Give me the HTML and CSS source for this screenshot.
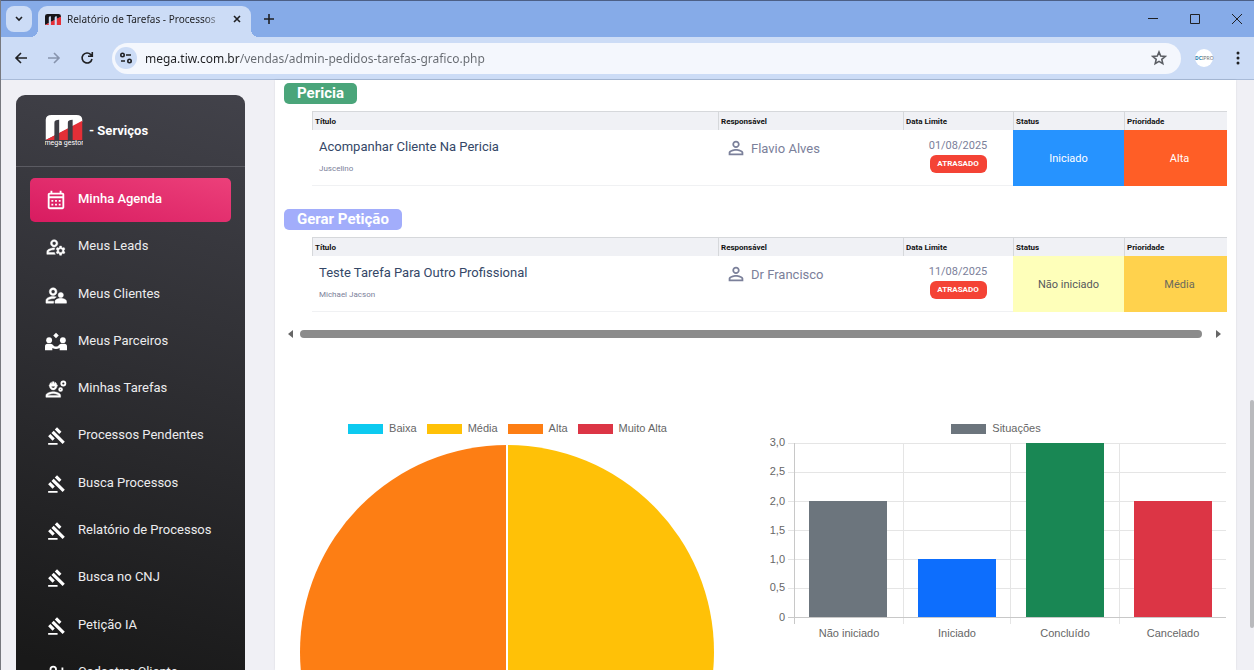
FILE: index.html
```html
<!DOCTYPE html>
<html lang="pt-BR">
  <head>
    <meta charset="UTF-8" />
    <meta name="viewport" content="width=device-width, initial-scale=1.0" />
    <title>Relatório de Tarefas - Processos</title>
    <link rel="stylesheet" href="styles.css">
  </head>
  <body>
    <!-- shared icons -->
    <svg class="sprite" aria-hidden="true">
      <symbol id="gavel" viewBox="-3 -2 28 28">
        <path d="M1 21h12v2H1zM5.245 8.07l2.83-2.827 14.14 14.142-2.828 2.828zM12.317 1l5.657 5.656-2.83 2.83-5.654-5.66zM3.825 9.485l5.657 5.657-2.828 2.828-5.657-5.657z" />
      </symbol>
      <symbol id="person" viewBox="0 0 24 24">
        <path d="M12 5.9a2.1 2.1 0 110 4.2 2.1 2.1 0 010-4.2m0 9c2.97 0 6.1 1.46 6.1 2.1v1.1H5.9V17c0-.64 3.13-2.1 6.1-2.1M12 4C9.79 4 8 5.79 8 8s1.79 4 4 4 4-1.79 4-4-1.79-4-4-4zm0 9c-2.67 0-8 1.34-8 4v3h16v-3c0-2.66-5.33-4-8-4z" />
      </symbol>
      <symbol id="mark" viewBox="0 0 38 26">
        <path d="M0 26V5Q0 0 6 0H32Q38 0 38 5V7L0 26Z" fill="var(--mark)" />
        <path d="M0 26L38 6V26Z" fill="#e42f37" />
        <path d="M9 26V8Q9 5 14 5V26ZM23 26V8Q23 5 28 5V26Z" fill="var(--slot)" />
      </symbol>
    </svg>

    <header class="browser">
      <div class="tab-strip">
        <button type="button" class="tab-search" aria-label="Pesquisar guias">
          <svg width="10" height="10" viewBox="0 0 10 10"><path d="M2 3l3 3 3-3" /></svg>
        </button>
        <div class="tab">
          <svg class="favicon" width="16" height="13"><use href="#mark" /></svg>
          <span class="tab-title">Relatório de Tarefas - Processos</span>
          <button type="button" class="icon-button" aria-label="Fechar">
            <svg width="10" height="10" viewBox="0 0 10 10"><path d="M2 2l6 6M8 2l-6 6" /></svg>
          </button>
        </div>
        <button type="button" class="icon-button new-tab" aria-label="Nova guia">
          <svg width="12" height="12" viewBox="0 0 12 12"><path d="M6 1v10M1 6h10" /></svg>
        </button>
        <div class="window-buttons">
          <button type="button" class="icon-button" aria-label="Minimizar">
            <svg width="10" height="10" viewBox="0 0 10 10"><path d="M0 4.5h10" class="thin" /></svg>
          </button>
          <button type="button" class="icon-button" aria-label="Maximizar">
            <svg width="10" height="10" viewBox="0 0 10 10"><path d="M.5.5h9v9h-9z" class="thin" /></svg>
          </button>
          <button type="button" class="icon-button" aria-label="Fechar janela">
            <svg width="10" height="10" viewBox="0 0 10 10"><path d="M0 0l10 10M10 0L0 10" class="thin" /></svg>
          </button>
        </div>
      </div>

      <div class="toolbar">
        <button type="button" class="icon-button" aria-label="Voltar">
          <svg width="14" height="14" viewBox="0 0 14 14"><path d="M13 7H2M7 2L2 7l5 5" /></svg>
        </button>
        <button type="button" class="icon-button dim" aria-label="Avançar">
          <svg width="14" height="14" viewBox="0 0 14 14"><path d="M1 7h11M7 2l5 5-5 5" /></svg>
        </button>
        <button type="button" class="icon-button" aria-label="Recarregar">
          <svg width="14" height="14" viewBox="0 0 14 14"><path d="M12 8A5 5 0 1 1 10.8 3.6L12 5M12.3 1v4.3H8" /></svg>
        </button>
        <div class="address">
          <button type="button" class="site-info" aria-label="Informações do site">
            <svg width="14" height="14" viewBox="0 0 14 14">
              <circle cx="3.5" cy="4" r="1.7" /><path d="M7 4h5M2 10h4" /><circle cx="10.5" cy="10" r="1.7" />
            </svg>
          </button>
          <input type="text" class="url" aria-label="Endereço" value="mega.tiw.com.br/vendas/admin-pedidos-tarefas-grafico.php" />
          <button type="button" class="icon-button star" aria-label="Favoritar">
            <svg width="16" height="16" viewBox="0 0 16 16"><path d="M8 2l1.7 4.1 4.4.4-3.3 2.9 1 4.3L8 11.4l-3.8 2.3 1-4.3L1.9 6.5l4.4-.4z" /></svg>
          </button>
        </div>
        <button type="button" class="profile" aria-label="Perfil"><b>DC</b>IPRO</button>
        <button type="button" class="icon-button menu" aria-label="Menu">
          <svg width="4" height="14" viewBox="0 0 4 14"><circle cx="2" cy="2" r="1.5" /><circle cx="2" cy="7" r="1.5" /><circle cx="2" cy="12" r="1.5" /></svg>
        </button>
      </div>
    </header>

    <div class="page">
      <aside class="sidebar">
        <a href="#" class="brand">
          <svg class="brand-logo" width="38" height="32" viewBox="0 0 38 32">
            <use href="#mark" width="38" height="25" />
            <text x="19" y="30" text-anchor="middle">mega gestor</text>
          </svg>
          <span>- Serviços</span>
        </a>
        <nav class="menu-list">
          <a href="#" class="menu-item active">
            <svg viewBox="0 0 24 24"><path d="M19 4h-1V2h-2v2H8V2H6v2H5c-1.11 0-1.99.9-1.99 2L3 20c0 1.1.89 2 2 2h14c1.1 0 2-.9 2-2V6c0-1.1-.9-2-2-2zm0 16H5V10h14v10zm0-12H5V6h14v2zM9 14H7v-2h2v2zm4 0h-2v-2h2v2zm4 0h-2v-2h2v2zm-8 4H7v-2h2v2zm4 0h-2v-2h2v2zm4 0h-2v-2h2v2z" /></svg>
            <span>Minha Agenda</span>
          </a>
          <a href="#" class="menu-item">
            <svg class="heavy" viewBox="0 0 24 24"><path d="M4 18v-.65c0-.34.16-.66.41-.81C6.1 15.53 8.03 15 10 15c.03 0 .05 0 .08.01.1-.7.3-1.37.59-1.98-.22-.02-.44-.03-.67-.03-2.42 0-4.68.67-6.61 1.82-.88.52-1.39 1.5-1.39 2.53V20h9.26c-.42-.6-.75-1.28-.97-2H4zM10 12c2.21 0 4-1.79 4-4s-1.79-4-4-4-4 1.79-4 4 1.79 4 4 4zm0-6c1.1 0 2 .9 2 2s-.9 2-2 2-2-.9-2-2 .9-2 2-2zM20.75 16c0-.22-.03-.42-.06-.63l1.14-1.01-1-1.73-1.45.49c-.32-.27-.68-.48-1.08-.63L18 11h-2l-.3 1.49c-.4.15-.76.36-1.08.63l-1.45-.49-1 1.73 1.14 1.01c-.03.21-.06.41-.06.63s.03.42.06.63l-1.14 1.01 1 1.73 1.45-.49c.32.27.68.48 1.08.63L16 21h2l.3-1.49c.4-.15.76-.36 1.08-.63l1.45.49 1-1.73-1.14-1.01c.03-.21.06-.41.06-.63zM17 18c-1.1 0-2-.9-2-2s.9-2 2-2 2 .9 2 2-.9 2-2 2z" /></svg>
            <span>Meus Leads</span>
          </a>
          <a href="#" class="menu-item">
            <svg class="heavy" viewBox="1 0 23 23"><path d="M9.5 12c2.2 0 4-1.8 4-4s-1.8-4-4-4-4 1.800-4 4 1.800 4 4 4zm0-6c1.100 0 2 .9 2 2s-.9 2-2 2-2-.9-2-2 .9-2 2-2zM10 18H4v-.7c0-.8 3-2.100 5.500-2.100h1.300c.5-.8 1.200-1.300 2-1.700-1-.3-2.200-.5-3.300-.5-2.700 0-7.500 1.300-7.500 4.200V20h8zM17.500 15c-2 0-6 1-6 3.200V20h12v-1.800c0-2.200-4-3.200-6-3.200z" /><circle cx="17.500" cy="11.500" r="2.700" /></svg>
            <span>Meus Clientes</span>
          </a>
          <a href="#" class="menu-item">
            <svg viewBox="0 0 24 24"><path d="M12 2l3 3-3 3-3-3z" /><circle cx="4.500" cy="10" r="3.200" /><circle cx="19.500" cy="10" r="3.200" /><path d="M0 21v-4q0-3 3-3h3q2 0 3.500 2 1 1 2.500 1t2.500-1q1.500-2 3.500-2h3q3 0 3 3v4h-8v-2.500q-2 1-4 1t-4-1V21z" /></svg>
            <span>Meus Parceiros</span>
          </a>
          <a href="#" class="menu-item">
            <svg class="heavy" viewBox="0 0 24 24">
              <path d="M9 15c-2.67 0-8 1.34-8 4v2h16v-2c0-2.66-5.33-4-8-4zm-6 4c.22-.72 3.31-2 6-2 2.7 0 5.77 1.29 6 2H3zM4.74 9H5c0 2.21 1.79 4 4 4s4-1.79 4-4h.26c.27 0 .49-.22.49-.49v-.02c0-.27-.22-.49-.49-.49H13c0-1.48-.81-2.75-2-3.45v.95c0 .28-.22.5-.5.5s-.5-.22-.5-.5V4.14C9.68 4.06 9.35 4 9 4s-.68.06-1 .14V5.5c0 .28-.22.5-.5.5S7 5.78 7 5.5v-.95C5.81 5.25 5 6.52 5 8h-.26c-.27 0-.49.22-.49.49v.03c0 .26.22.48.49.48zM11 9c0 1.1-.9 2-2 2s-2-.9-2-2h4z" />
              <g class="gears"><circle cx="20" cy="6" r="2.2" /><circle cx="17" cy="12.5" r="1.5" /></g>
            </svg>
            <span>Minhas Tarefas</span>
          </a>
          <a href="#" class="menu-item"><svg><use href="#gavel" /></svg><span>Processos Pendentes</span></a>
          <a href="#" class="menu-item"><svg><use href="#gavel" /></svg><span>Busca Processos</span></a>
          <a href="#" class="menu-item"><svg><use href="#gavel" /></svg><span>Relatório de Processos</span></a>
          <a href="#" class="menu-item"><svg><use href="#gavel" /></svg><span>Busca no CNJ</span></a>
          <a href="#" class="menu-item"><svg><use href="#gavel" /></svg><span>Petição IA</span></a>
          <a href="#" class="menu-item">
            <svg viewBox="0 0 24 24"><path d="M9 4a4 4 0 100 8 4 4 0 000-8zm0 2a2 2 0 110 4 2 2 0 010-4zM18 6h2v3h3v2h-3v3h-2v-3h-3V9h3zM1 20v-3c0-2.5 5-4 8-4s8 1.5 8 4v3zm2-2h12v-1c0-.6-3-2-6-2s-6 1.4-6 2z" /></svg>
            <span>Cadastrar Cliente</span>
          </a>
        </nav>
      </aside>

      <main class="card">
        <section class="group">
          <h2 class="group-title green">Pericia</h2>
          <table class="tasks">
            <thead>
              <tr>
                <th>Título</th>
                <th class="col-owner">Responsável</th>
                <th class="col-date">Data Limite</th>
                <th class="col-status">Status</th>
                <th class="col-priority">Prioridade</th>
              </tr>
            </thead>
            <tbody>
              <tr>
                <td class="task"><a href="#">Acompanhar Cliente Na Pericia</a><small>Juscelino</small></td>
                <td><div class="owner"><svg width="22" height="22"><use href="#person" /></svg>Flavio Alves</div></td>
                <td class="date">01/08/2025<span class="late">ATRASADO</span></td>
                <td class="state started">Iniciado</td>
                <td class="state priority high">Alta</td>
              </tr>
            </tbody>
          </table>
        </section>

        <section class="group">
          <h2 class="group-title lilac">Gerar Petição</h2>
          <table class="tasks">
            <thead>
              <tr>
                <th>Título</th>
                <th class="col-owner">Responsável</th>
                <th class="col-date">Data Limite</th>
                <th class="col-status">Status</th>
                <th class="col-priority">Prioridade</th>
              </tr>
            </thead>
            <tbody>
              <tr>
                <td class="task"><a href="#">Teste Tarefa Para Outro Profissional</a><small>Michael Jacson</small></td>
                <td><div class="owner"><svg width="22" height="22"><use href="#person" /></svg>Dr Francisco</div></td>
                <td class="date">11/08/2025<span class="late">ATRASADO</span></td>
                <td class="state waiting">Não iniciado</td>
                <td class="state priority medium">Média</td>
              </tr>
            </tbody>
          </table>
        </section>

        <div class="scroll-x">
          <svg width="5" height="8" viewBox="0 0 5 8"><path d="M5 0v8L0 4z" /></svg>
          <div class="scroll-thumb"></div>
          <svg width="5" height="8" viewBox="0 0 5 8"><path d="M0 0v8l5-4z" /></svg>
        </div>

        <div class="charts">
          <figure class="chart">
            <figcaption class="legend">
              <span class="key cyan">Baixa</span>
              <span class="key yellow">Média</span>
              <span class="key orange">Alta</span>
              <span class="key red">Muito Alta</span>
            </figcaption>
            <svg class="pie" viewBox="0 0 415 415">
              <path d="M207 207V0a207 207 0 0 1 0 414z" fill="#ffc107" />
              <path d="M207 207V414a207 207 0 0 1 0-414z" fill="#fd7e14" />
              <path d="M207 0v415" stroke="#fff" stroke-width="2" />
            </svg>
          </figure>

          <figure class="chart">
            <figcaption class="legend">
              <span class="key gray">Situações</span>
            </figcaption>
            <svg class="bars" viewBox="0 0 462 206">
              <g class="grid">
                <path d="M23 7.5h438M23 36.5h438M23 65.5h438M23 94.5h438M23 123.5h438M23 152.5h438" />
                <path d="M138.5 7v181M245.5 7v181M354.5 7v181" />
                <path class="axis" d="M23 181.5h438M29.5 7v181" />
              </g>
              <rect x="44" y="65" width="78" height="116" fill="#6c757d" />
              <rect x="153" y="123" width="78" height="58" fill="#0d6efd" />
              <rect x="261" y="7" width="78" height="174" fill="#198754" />
              <rect x="369" y="65" width="78" height="116" fill="#dc3545" />
              <g text-anchor="end">
                <text x="20" y="10">3,0</text>
                <text x="20" y="39">2,5</text>
                <text x="20" y="69">2,0</text>
                <text x="20" y="98">1,5</text>
                <text x="20" y="127">1,0</text>
                <text x="20" y="155">0,5</text>
                <text x="20" y="185">0</text>
              </g>
              <g text-anchor="middle">
                <text x="84" y="201">Não iniciado</text>
                <text x="192" y="201">Iniciado</text>
                <text x="300" y="201">Concluído</text>
                <text x="408" y="201">Cancelado</text>
              </g>
            </svg>
          </figure>
        </div>
      </main>

      <div class="scroll-y"><div class="scroll-y-thumb"></div></div>
    </div>
  </body>
</html>
```
FILE: styles.css
```css
* {
  box-sizing: border-box;
}

body {
  margin: 0;
  height: 100vh;
  display: flex;
  flex-direction: column;
  overflow: hidden;
  background: #f0f0f5;
  border-left: 1px solid #77797f;
  font-family: Roboto, "Liberation Sans", sans-serif;
}

.sprite {
  display: none;
}

a {
  color: inherit;
  text-decoration: none;
}

button {
  border: 0;
  padding: 0;
  background: none;
  font: inherit;
}

/* browser window */
.browser {
  flex: none;
  border-top: 1px solid #4c5f86;
  border-bottom: 1px solid #a9bbd8;
  background: #ccdcf6;
  font-family: "Noto Sans", "Open Sans", sans-serif;
}

.browser svg {
  display: block;
  fill: none;
  stroke: #1f2023;
  stroke-width: 1.6;
}

.browser .thin {
  stroke-width: 1;
}

.tab-strip {
  display: flex;
  align-items: center;
  height: 36px;
  background: #86abe8;
}

.tab-search {
  display: grid;
  place-items: center;
  width: 26px;
  height: 26px;
  margin-left: 5px;
  border-radius: 8px;
  background: #ccdcf6;
}

.tab {
  position: relative;
  align-self: flex-end;
  display: flex;
  align-items: center;
  gap: 6px;
  width: 213px;
  height: 31px;
  margin-left: 6px;
  padding: 0 6px 5px 7px;
  border-radius: 9px 9px 0 0;
  background: #ccdcf6;
}

.tab::before,
.tab::after {
  content: "";
  position: absolute;
  bottom: 0;
  width: 8px;
  height: 8px;
}

.tab::before {
  right: 100%;
  background: radial-gradient(circle at 0 0, #86abe8 8px, #ccdcf6 8px);
}

.tab::after {
  left: 100%;
  background: radial-gradient(circle at 100% 0, #86abe8 8px, #ccdcf6 8px);
}

.browser .favicon {
  --mark: #16161a;
  --slot: #ccdcf6;
  flex: none;
  stroke: none;
}

.tab-title {
  flex: 1;
  overflow: hidden;
  white-space: nowrap;
  font-size: 10px;
  color: #1f2023;
  mask-image: linear-gradient(to right, #000 88%, transparent);
}

.icon-button {
  display: grid;
  place-items: center;
  width: 16px;
  height: 24px;
}

.new-tab {
  margin-left: 10px;
}

.window-buttons {
  display: flex;
  gap: 26px;
  margin-left: auto;
  margin-right: 9px;
}

.toolbar {
  display: flex;
  align-items: center;
  gap: 17px;
  height: 42px;
  padding: 0 8px 0 12px;
}

.browser .dim svg {
  stroke: #8794ad;
}

.address {
  flex: 1;
  display: flex;
  align-items: center;
  gap: 8px;
  height: 31px;
  padding: 0 14px 0 3px;
  border-radius: 16px;
  background: #f4f7fd;
}

.site-info {
  display: grid;
  place-items: center;
  width: 22px;
  height: 22px;
  border-radius: 50%;
  background: #ccdcf6;
}

.browser .star svg {
  stroke: #5b5e64;
}

/* the host is darker than the path */
.url {
  flex: 1;
  border: 0;
  padding: 0;
  background: linear-gradient(to right, #1f2023 95px, #666a70 95px);
  background-clip: text;
  -webkit-background-clip: text;
  -webkit-text-fill-color: transparent;
  color: #1f2023;
  font: 12px "Noto Sans", "Open Sans", sans-serif;
}

.profile {
  width: 18px;
  height: 18px;
  margin-left: -3px;
  border-radius: 50%;
  background: #fff;
  color: #6d6f73;
  font-size: 5px;
  white-space: nowrap;
}

.profile b {
  color: #2680b0;
}

.browser .menu svg {
  fill: #1f2023;
  stroke: none;
}

/* page */
.page {
  flex: 1;
  min-height: 0;
  display: flex;
}

.sidebar {
  flex: none;
  align-self: flex-start;
  width: 229px;
  margin: 15px 30px 0 15px;
  border-radius: 9px;
  background: linear-gradient(195deg, #42424a, #191919 600px);
  color: #fff;
}

.brand {
  display: flex;
  align-items: center;
  gap: 6px;
  height: 72px;
  padding-left: 29px;
  border-bottom: 1px solid #5b5b62;
  font-size: 13px;
  font-weight: 700;
}

.brand-logo {
  --mark: #fff;
  --slot: #3e3e45;
}

.brand-logo text {
  fill: #fff;
  font-size: 7px;
  font-weight: 400;
}

.menu-list {
  display: flex;
  flex-direction: column;
  justify-content: space-between;
  height: 517px;
  margin: 11px 14px 14px;
}

.menu-item {
  display: flex;
  align-items: center;
  gap: 11px;
  height: 44px;
  padding-left: 15px;
  border-radius: 5px;
  color: #ececee;
  font-size: 13px;
  font-weight: 400;
  white-space: nowrap;
}

.menu-item svg {
  width: 22px;
  height: 22px;
  fill: #fff;
}

.menu-item .heavy {
  stroke: #fff;
  stroke-width: 0.5;
}

.menu-item span {
  padding-bottom: 3px;
}

.menu-item .gears {
  fill: none;
  stroke: #fff;
  stroke-width: 2;
}

.menu-item.active {
  background: linear-gradient(195deg, #ec407a, #d81b60);
  color: #fff;
  font-weight: 500;
}

.card {
  flex: 1;
  min-width: 0;
  padding: 3px 9px 0;
  background: #fff;
  box-shadow: 0 0 2px rgba(0, 0, 0, 0.1);
}

.group {
  margin-bottom: 23px;
}

.group-title {
  width: fit-content;
  margin: 0 0 7px;
  padding: 0 13px;
  border-radius: 5px;
  color: #fff;
  font-size: 15px;
  line-height: 21px;
}

.green {
  background: #4aa57a;
}

.lilac {
  background: #a2adfb;
}

.tasks {
  width: calc(100% - 28px);
  margin-left: 28px;
  border-collapse: separate;
  border-spacing: 0;
  table-layout: fixed;
}

.tasks th {
  height: 19px;
  padding: 0 2px;
  border-top: 1px solid #d6d8db;
  border-left: 1px solid #d6d8db;
  background: #f0f1f5;
  color: #111;
  font-size: 8px;
  font-weight: 700;
  text-align: left;
}

.tasks td {
  height: 56px;
  padding: 0;
  border-bottom: 1px solid #f0f1f3;
  color: #7b809a;
  font-size: 13px;
  vertical-align: top;
}

.col-owner {
  width: 185px;
}

.col-date {
  width: 110px;
}

.col-status {
  width: 111px;
}

.col-priority {
  width: 103px;
}

.tasks .task {
  padding: 8px 7px 0;
}

.task a {
  display: block;
  color: #344767;
  line-height: 18px;
}

.task small {
  display: block;
  margin-top: 8px;
  font-size: 8px;
  line-height: 10px;
}

.owner {
  display: flex;
  align-items: center;
  gap: 4px;
  padding: 7px 7px 0;
}

.owner svg {
  fill: #7b809a;
}

.tasks .date {
  padding-top: 8px;
  font-size: 11px;
  line-height: 16px;
  text-align: center;
}

.late {
  display: block;
  width: 57px;
  margin: 1px auto 0;
  border-radius: 6px;
  background: #f44335;
  color: #fff;
  font-size: 8px;
  font-weight: 700;
  line-height: 18px;
}

.tasks .state {
  border-bottom: 0;
  font-size: 11px;
  text-align: center;
  vertical-align: middle;
}

.tasks .priority {
  padding-left: 8px;
}

.tasks .started {
  background: #2693ff;
  color: #fff;
}

.tasks .high {
  background: #ff5e26;
  color: #fff;
}

.tasks .waiting {
  background: #feffba;
  color: #55585c;
}

.tasks .medium {
  background: #ffd24d;
  color: #6c6a5c;
}

.scroll-x {
  display: flex;
  align-items: center;
  gap: 7px;
  margin: -5px 6px 0 4px;
}

.scroll-x svg {
  flex: none;
  fill: #666;
}

.scroll-thumb {
  flex: 1;
  height: 8px;
  margin-right: 7px;
  border-radius: 4px;
  background: #8b8b8b;
}

.charts {
  display: grid;
  grid-template-columns: 447fr 462fr;
  gap: 34px;
  align-items: start;
  margin-top: 82px;
}

.chart {
  margin: 0;
  color: #666;
  font-family: "Liberation Sans", Arial, sans-serif;
  font-size: 11px;
}

.legend {
  display: flex;
  justify-content: center;
  gap: 10px;
  line-height: 16px;
}

.key {
  display: flex;
  align-items: center;
  gap: 6px;
}

.key::before {
  content: "";
  width: 35px;
  height: 10px;
  margin-top: 2px;
  background: var(--key);
}

.cyan {
  --key: #0dcaf0;
}

.yellow {
  --key: #ffc107;
}

.orange {
  --key: #fd7e14;
}

.red {
  --key: #dc3545;
}

.gray {
  --key: #6c757d;
}

.pie {
  display: block;
  width: calc(100% - 32px);
  margin: 9px auto 0;
}

.bars {
  display: block;
  width: 100%;
}

.bars text {
  fill: #666;
}

.grid {
  fill: none;
  stroke: #e5e5e5;
}

.grid .axis {
  stroke: #c8c8c8;
}

.scroll-y {
  width: 4px;
  margin-left: 14px;
  overflow: hidden;
}

.scroll-y-thumb {
  height: 228px;
  margin-top: 320px;
  border-radius: 2px;
  background: #b9babd;
}
```
